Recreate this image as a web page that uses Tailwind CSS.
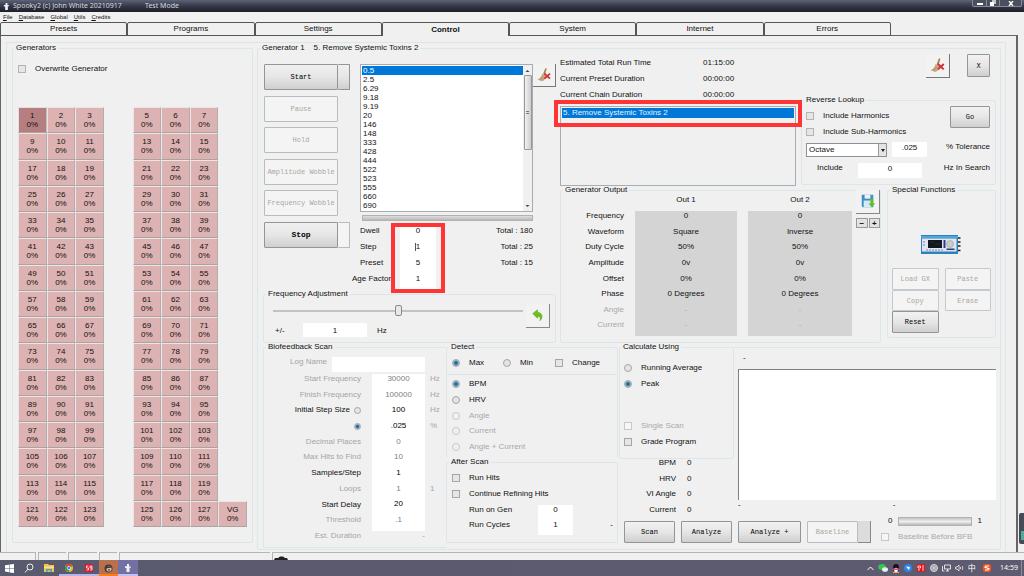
<!DOCTYPE html>
<html lang="en">
<head>
<meta charset="utf-8">
<title>Spooky2</title>
<script src="https://cdn.jsdelivr.net/npm/@tailwindcss/browser@4"></script>
</head>
<body class="relative flex min-h-screen flex-col overflow-x-hidden bg-[#f0f0f0] font-['Liberation_Sans',Arial,sans-serif] text-[8px] leading-[10px] text-[#111]">

<svg class="hidden" aria-hidden="true">
  <symbol id="broom" viewBox="0 0 24 24">
    <path d="M13.500 4.500l1.500.5-2 7-2-1z" fill="#a97c52"/>
    <path d="M10 10.500l4 2.500c0 3-2 5.500-5 5.500l-4-1.500c3-1.500 4.500-3.500 5-6.500z" fill="#c4a27c"/>
    <path d="M7.500 17l2-3" stroke="#a98660" stroke-width=".6"/>
    <path d="M12.500 10.500l6 5.500M18.500 10.500l-6 5.500" stroke="#cf2f33" stroke-width="2"/>
  </symbol>
  <symbol id="ghost" viewBox="0 0 10 10">
    <path d="M4 1h2v2l2 1-.5 1L6.500 4.500V9H3.500V5L2 5V3.500L4 3z" fill="#eef0f4"/>
    <path d="M7 1l1 1" stroke="#e04a4a" stroke-width="1"/>
  </symbol>
</svg>

<header class="flex h-3 items-center bg-linear-to-b from-[#5c6278] via-[#363948] to-[#1d1e29] pl-[2px] font-['Noto_Sans',sans-serif] text-[7px] text-[#d6d8de]">
  <svg class="h-[9px] w-[9px]"><use href="#ghost"/></svg>
  <h1 class="ml-[2px] w-[132px] whitespace-nowrap">Spooky2 (c) John White 20210917</h1>
  <span class="flex-1">Test Mode</span>
  <div class="mr-[2px] flex h-[7px] self-start overflow-hidden rounded-b-[2px] border border-t-0 border-[#858995] bg-[#4b4e5e]">
    <button aria-label="Minimize" class="flex w-[14px] items-end justify-center border-r border-[#858995] pb-px"><span class="h-[2px] w-[6px] bg-white"></span></button>
    <button aria-label="Restore" class="flex w-[13px] items-center justify-center border-r border-[#858995]"><svg class="h-[6px] w-[6px]" viewBox="0 0 6 6"><path d="M2 0h4v4H2z" fill="#bcc"/><path d="M0 2h4v4H0z" fill="#fff"/></svg></button>
    <button aria-label="Close" class="flex w-[21px] items-center justify-center"><svg class="h-[5px] w-[6px]" viewBox="0 0 6 5"><path d="M1 0l4 5M5 0L1 5" stroke="#fff" stroke-width="1.400"/></svg></button>
  </div>
</header>

<nav class="flex h-[10px] items-center gap-[6px] pl-[3px] text-[6px] leading-[10px]">
  <button><u>F</u>ile</button><button><u>D</u>atabase</button><button><u>G</u>lobal</button><button><u>U</u>tils</button><button><u>C</u>redits</button>
</nav>

<div role="tablist" class="relative z-10 -mb-px grid h-[14px] w-[87%] grid-cols-7 text-center">
  <button role="tab" class="rounded-t-[2px] border border-[#555]">Presets</button>
  <button role="tab" class="rounded-t-[2px] border border-[#555]">Programs</button>
  <button role="tab" class="rounded-t-[2px] border border-[#555]">Settings</button>
  <button role="tab" aria-selected="true" class="rounded-t-[2px] border border-b-0 border-[#555] bg-[#f0f0f0] font-bold">Control</button>
  <button role="tab" class="rounded-t-[2px] border border-[#555]">System</button>
  <button role="tab" class="rounded-t-[2px] border border-[#555]">Internet</button>
  <button role="tab" class="rounded-t-[2px] border border-[#555]">Errors</button>
</div>

<main class="mr-[6px] flex flex-1 border border-r-2 border-b-0 border-[#666] pt-[6px] pr-[10px] pl-[5px]">
<div class="flex flex-1 items-start gap-1 border border-b-0 border-[#dbe6e8] pr-1 pl-[5px]">

  <fieldset class="w-[241px] shrink-0 rounded-[2px] border border-[#dbe6e8] px-[5px] pb-[15px]">
    <legend class="-ml-[4px] px-[2px]">Generators</legend>
    <label class="mt-[11px] flex items-center gap-[9px]"><input type="checkbox" class="h-2 w-2 appearance-none border border-[#b4b4b4] bg-[#e6e6e6]">Overwrite Generator</label>
    <div id="generators" class="mt-[33px] grid h-[420px] grid-cols-8 grid-rows-[repeat(16,minmax(0,1fr))]"></div>
  </fieldset>

  <fieldset class="min-w-0 flex-1 rounded-[2px] border border-[#dbe6e8] pb-px pl-[5px]">
    <legend class="-ml-[3px] px-[2px] whitespace-pre">Generator 1    5. Remove Systemic Toxins 2</legend>

    <div class="flex gap-1 pr-1">
      <!-- Transport buttons, frequency list and adjustment -->
      <section class="flex w-[293px] shrink-0 flex-col pt-[11px]">
        <div class="flex h-[225px] items-start pl-px">
          <div class="flex h-[184px] w-[86px] shrink-0 flex-col justify-between font-['Liberation_Mono',monospace] text-[7px]">
            <div class="flex h-[26px]">
              <button class="w-[74px] rounded-[1px] border border-[#959595] bg-linear-to-b from-[#f0f0f0] via-[#e6e6e6] to-[#cfcfcf] text-black">Start</button>
              <button aria-label="Start options" class="w-3 rounded-[1px] border border-l-0 border-[#959595] bg-linear-to-b from-[#f0f0f0] via-[#e6e6e6] to-[#cfcfcf]"></button>
            </div>
            <button disabled class="h-[26px] w-[74px] rounded-[1px] border border-[#b8bcc0] bg-[#f4f4f4] text-[#a9a99f]">Pause</button>
            <button disabled class="h-[26px] w-[74px] rounded-[1px] border border-[#b8bcc0] bg-[#f4f4f4] text-[#a9a99f]">Hold</button>
            <button disabled class="h-[26px] w-[74px] rounded-[1px] border border-[#b8bcc0] bg-[#f4f4f4] whitespace-nowrap text-[#a9a99f]">Amplitude Wobble</button>
            <button disabled class="h-[26px] w-[74px] rounded-[1px] border border-[#b8bcc0] bg-[#f4f4f4] whitespace-nowrap text-[#a9a99f]">Frequency Wobble</button>
            <div class="flex h-[26px]">
              <button class="w-[74px] rounded-[1px] border border-[#959595] bg-linear-to-b from-[#f0f0f0] via-[#e6e6e6] to-[#cfcfcf] text-[8px] font-bold text-black">Stop</button>
              <button aria-label="Stop options" class="w-3 rounded-[1px] border border-l-0 border-[#b8bcc0] bg-[#f4f4f4]"></button>
            </div>
          </div>

          <div class="ml-[2px] w-[181px] shrink-0">
            <div class="ml-2 flex h-[148px] border border-[#a5acb5] bg-white">
              <ul role="listbox" aria-label="Frequencies" class="flex-1 overflow-hidden py-px pl-px leading-[9px]">
                <li role="option" aria-selected="true" class="bg-[#0078d7] pl-px text-white">0.5</li>
                <li role="option" class="pl-px">2.5</li><li role="option" class="pl-px">6.29</li><li role="option" class="pl-px">9.18</li><li role="option" class="pl-px">9.19</li><li role="option" class="pl-px">20</li><li role="option" class="pl-px">146</li><li role="option" class="pl-px">148</li><li role="option" class="pl-px">333</li><li role="option" class="pl-px">428</li><li role="option" class="pl-px">444</li><li role="option" class="pl-px">522</li><li role="option" class="pl-px">523</li><li role="option" class="pl-px">555</li><li role="option" class="pl-px">660</li><li role="option" class="pl-px">690</li>
              </ul>
              <div class="flex w-[9px] flex-col items-center bg-[#f0f0f0]">
                <svg class="h-[10px] w-[9px]" viewBox="0 0 9 10"><path d="M2.500 7h4l-2-2z" fill="#444"/></svg>
                <div class="flex h-[75px] w-2 flex-col items-center justify-center gap-px rounded-[1px] border border-[#979797] bg-linear-to-r from-[#f2f2f2] to-[#cdcdcd]"><span class="h-px w-[3px] bg-[#777]"></span><span class="h-px w-[3px] bg-[#777]"></span></div>
                <svg class="mt-auto h-[10px] w-[9px]" viewBox="0 0 9 10"><path d="M2.500 4h4l-2 2z" fill="#444"/></svg>
              </div>
            </div>
            <div role="progressbar" aria-label="Step progress" class="mt-[3px] ml-[10px] h-[6px] border border-[#b2b2b2] bg-linear-to-b from-[#dedede] to-[#b9b9b9]"></div>
            <div class="mt-[5px] flex">
              <div class="grid w-12 auto-rows-[16px]">
                <label for="dwell" class="pl-2">Dwell</label><label for="step" class="pl-2">Step</label><label for="preset" class="pl-2">Preset</label><label for="age" class="whitespace-nowrap">Age Factor</label>
              </div>
              <div class="relative grid w-9 auto-rows-[16px] bg-white">
                <input id="dwell" value="0" class="w-full min-w-0 pb-[6px] text-center">
                <div class="relative"><input id="step" value="1" class="w-full min-w-0 pb-[6px] text-center"><span class="absolute top-px left-[15px] h-2 w-px bg-[#555]"></span></div>
                <input id="preset" value="5" class="w-full min-w-0 pb-[6px] text-center">
                <input id="age" value="1" class="w-full min-w-0 pb-[6px] text-center">
                <div class="pointer-events-none absolute -inset-x-[9px] -top-[3px] -bottom-[3px] border-4 border-[#ff3535]"></div>
              </div>
              <div class="grid flex-1 auto-rows-[16px] text-right"><span>Total : 180</span><span>Total : 25</span><span>Total : 15</span></div>
            </div>
          </div>
          <button aria-label="Clear frequencies" class="h-[23px] w-[23px] shrink-0 border-r border-b border-[#777] bg-[#f2f2f2]"><svg class="h-[22px] w-[22px]"><use href="#broom"/></svg></button>
        </div>

        <fieldset class="relative h-[54px] rounded-[2px] border border-[#dbe6e8] pr-[5px] pl-[9px]">
          <legend class="-ml-[7px] px-[2px]">Frequency Adjustment</legend>
          <div class="flex items-start gap-[3px]">
            <input type="range" aria-label="Frequency adjustment" class="mt-[6px] h-3 min-w-0 flex-1 appearance-none bg-transparent [&::-webkit-slider-runnable-track]:h-[2px] [&::-webkit-slider-runnable-track]:bg-[#c2c2c2] [&::-webkit-slider-thumb]:-mt-[5px] [&::-webkit-slider-thumb]:h-[11px] [&::-webkit-slider-thumb]:w-[7px] [&::-webkit-slider-thumb]:appearance-none [&::-webkit-slider-thumb]:rounded-[2px] [&::-webkit-slider-thumb]:border [&::-webkit-slider-thumb]:border-[#8a8a8a] [&::-webkit-slider-thumb]:bg-[#e8e8e8]">
            <button aria-label="Undo" class="mt-[5px] mb-[-6px] h-6 w-6 border-r border-b border-[#888] bg-[#f2f2f2]"><svg class="h-[23px] w-[23px]" viewBox="0 0 24 24"><path d="M7 10l5-4v2.500c5 .5 6.500 5.500 2.500 9 .8-3 .3-4.500-2.500-4.800V15z" fill="#6cbf1c" stroke="#55a515" stroke-width=".5"/></svg></button>
          </div>
          <div class="mt-[3px] flex items-start">
            <label for="delta" class="w-[30px] pl-[2px] leading-3">+/-</label>
            <input id="delta" value="1" class="-mt-[2px] h-[14px] w-16 bg-white text-center">
            <span class="pl-[10px] leading-3">Hz</span>
          </div>
        </fieldset>
      </section>

      <!-- Run times, reverse lookup and outputs -->
      <section class="min-w-0 flex-1">
        <div class="flex gap-[5px]">
          <div class="flex-1 pt-[5px]">
            <dl class="grid auto-rows-[16px] grid-cols-[143px_1fr]">
              <dt>Estimated Total Run Time</dt><dd>01:15:00</dd>
              <dt>Current Preset Duration</dt><dd>00:00:00</dd>
              <dt>Current Chain Duration</dt><dd>00:00:00</dd>
            </dl>
            <div class="relative h-[80px] border border-[#a9adb3] p-px">
              <ul role="listbox" aria-label="Preset chain"><li role="option" aria-selected="true" class="h-[10px] bg-[#0078d7] pl-px leading-[10px] text-[#e4f1fc]">5. Remove Systemic Toxins 2</li></ul>
              <div class="pointer-events-none absolute -inset-x-[7px] -top-[7px] h-[27px] border-4 border-[#ff3535]"></div>
            </div>
          </div>
          <div class="w-[195px] shrink-0">
            <div class="mt-px flex justify-end gap-[17px] pr-[6px]">
              <button aria-label="Clear chain" class="h-6 w-6 border-r border-b border-[#777] bg-[#f2f2f2]"><svg class="h-[23px] w-[23px]"><use href="#broom"/></svg></button>
              <button class="h-[23px] w-[23px] rounded-[1px] border border-[#959595] bg-linear-to-b from-[#f2f2f2] via-[#e6e6e6] to-[#cfcfcf] font-['Liberation_Mono',monospace] text-[7px]">X</button>
            </div>
            <fieldset class="mt-[17px] h-[90px] rounded-[2px] border border-[#dbe6e8] pr-[5px] pl-1">
              <legend class="-ml-[2px] px-[2px]">Reverse Lookup</legend>
              <div class="flex items-start justify-between pt-px">
                <div class="grid gap-[6px] pt-[5px]">
                  <label class="flex items-center gap-[9px]"><input type="checkbox" class="h-2 w-2 appearance-none border border-[#b4b4b4] bg-[#e6e6e6]">Include Harmonics</label>
                  <label class="flex items-center gap-[9px]"><input type="checkbox" class="h-2 w-2 appearance-none border border-[#b4b4b4] bg-[#e6e6e6]">Include Sub-Harmonics</label>
                </div>
                <button class="h-[22px] w-10 rounded-[1px] border border-[#959595] bg-linear-to-b from-[#f2f2f2] via-[#e6e6e6] to-[#cfcfcf] font-['Liberation_Mono',monospace] text-[7px]">Go</button>
              </div>
              <div class="mt-[5px] flex h-[15px] items-start">
                <div class="relative h-[14px] w-[81px] self-end">
                  <select aria-label="Lookup range" class="h-full w-full appearance-none border border-[#8d9299] bg-white pl-[2px]"><option>Octave</option></select>
                  <span class="pointer-events-none absolute inset-y-px right-px flex w-2 items-center justify-center border-l border-[#999] bg-[#e4e4e4]"><svg class="h-[3px] w-1" viewBox="0 0 4 3"><path d="M0 0h4L2 3z" fill="#222"/></svg></span>
                </div>
                <input id="tol" value=".025" class="ml-[5px] h-[15px] w-[35px] bg-white pb-[4px] text-center">
                <label for="tol" class="flex-1 text-right">% Tolerance</label>
              </div>
              <div class="mt-[6px] flex h-[15px] items-start">
                <label for="hz" class="w-[52px] pl-[11px]">Include</label>
                <input id="hz" value="0" class="h-[15px] w-16 bg-white pb-[4px] text-center">
                <span class="flex-1 text-right">Hz In Search</span>
              </div>
            </fieldset>
          </div>
        </div>

        <div class="-mt-px flex items-start gap-[6px]">
          <fieldset class="h-[158px] min-w-0 flex-1 rounded-[2px] border border-[#dbe6e8]">
            <legend class="ml-[2px] px-[2px]">Generator Output</legend>
            <div class="flex gap-1">
              <table class="h-[141px] flex-1 table-fixed border-separate border-spacing-0 text-center">
                <thead><tr class="h-4 align-top"><td class="w-[74px]"></td><th class="border-r-[11px] border-[#f0f0f0] font-normal">Out 1</th><th class="w-[104px] font-normal">Out 2</th></tr></thead>
                <tbody class="align-top">
                  <tr><th class="pr-[11px] text-right font-normal">Frequency</th><td class="border-r-[11px] border-[#f0f0f0] bg-[#d4d4d4]">0</td><td class="bg-[#d4d4d4]">0</td></tr>
                  <tr><th class="pr-[11px] text-right font-normal">Waveform</th><td class="border-r-[11px] border-[#f0f0f0] bg-[#d4d4d4]">Square</td><td class="bg-[#d4d4d4]">Inverse</td></tr>
                  <tr><th class="pr-[11px] text-right font-normal">Duty Cycle</th><td class="border-r-[11px] border-[#f0f0f0] bg-[#d4d4d4]">50%</td><td class="bg-[#d4d4d4]">50%</td></tr>
                  <tr><th class="pr-[11px] text-right font-normal">Amplitude</th><td class="border-r-[11px] border-[#f0f0f0] bg-[#d4d4d4]">0v</td><td class="bg-[#d4d4d4]">0v</td></tr>
                  <tr><th class="pr-[11px] text-right font-normal">Offset</th><td class="border-r-[11px] border-[#f0f0f0] bg-[#d4d4d4]">0%</td><td class="bg-[#d4d4d4]">0%</td></tr>
                  <tr><th class="pr-[11px] text-right font-normal">Phase</th><td class="border-r-[11px] border-[#f0f0f0] bg-[#d4d4d4]">0 Degrees</td><td class="bg-[#d4d4d4]">0 Degrees</td></tr>
                  <tr class="text-[#a8a8ae]"><th class="pr-[11px] text-right font-normal">Angle</th><td class="border-r-[11px] border-[#f0f0f0] bg-[#d4d4d4]">-</td><td class="bg-[#d4d4d4]">-</td></tr>
                  <tr class="text-[#a8a8ae]"><th class="pr-[11px] text-right font-normal">Current</th><td class="border-r-[11px] border-[#f0f0f0] bg-[#d4d4d4]">-</td><td class="bg-[#d4d4d4]">-</td></tr>
                </tbody>
              </table>
              <div class="-mt-[5px] w-6 shrink-0">
                <button aria-label="Save" class="block h-6 w-6 border-r border-b border-[#888] bg-[#f2f2f2]"><svg class="h-[23px] w-[23px]" viewBox="0 0 24 24"><path d="M6 5h12v13H7l-1-1z" fill="#3f8fc4"/><path d="M9 5h6v4H9z" fill="#e8f2fa"/><path d="M8 11h8v7H8z" fill="#d5eaf5"/><path d="M15 9h3v5h2l-3.500 4-3.500-4h2z" fill="#5fbf25"/></svg></button>
                <div class="mt-1 flex gap-px"><button class="h-[10px] flex-1 border border-[#999] bg-[#e2e2e2] leading-[7px] font-bold">−</button><button class="h-[10px] flex-1 border border-[#999] bg-[#e2e2e2] leading-[7px] font-bold">+</button></div>
              </div>
            </div>
          </fieldset>

          <fieldset class="h-[153px] w-[109px] shrink-0 rounded-[2px] border border-[#dbe6e8] px-[4px]">
            <legend class="-ml-[2px] px-[2px]">Special Functions</legend>
            <svg class="mt-[40px] ml-[29px] h-[19px] w-10" viewBox="0 0 40 19" role="img" aria-label="Generator device">
              <path d="M0 0h37v19H0z" fill="#2a83bd"/><path d="M1 3.500h34.500v13H1z" fill="#e2e5ee"/><path d="M0 1h37v2H0z" fill="#4aa8dc"/><path d="M7 5h14v8H7z" fill="#15171f"/><path d="M9 7h4M14 9h5" stroke="#334" stroke-width=".6"/>
              <path d="M22.500 5h2v8h-2z" fill="#2c3a8c"/><circle cx="29" cy="9" r="3.500" fill="#c9cbc6" stroke="#a0a3aa" stroke-width=".7"/><path d="M25.500 13.500h8v1.500h-8z" fill="#2c3a8c"/><path d="M2 7h3M2 10h3M5 15h17" stroke="#7d86ab" stroke-width="1" stroke-dasharray="2 1"/>
              <path d="M37 3h2.500M37 7h2.500M37 11h2.500M37 15.500h2.500" stroke="#222" stroke-width="1.500"/>
            </svg>
            <div class="mt-[14px] grid grid-cols-2 gap-x-[6px] font-['Liberation_Mono',monospace] text-[7px] text-[#a9a99f]">
              <button disabled class="h-[22px] rounded-[1px] border border-[#c3c9cc] bg-[#f4f4f4]">Load GX</button>
              <button disabled class="h-[22px] rounded-[1px] border border-[#c3c9cc] bg-[#f4f4f4]">Paste</button>
              <button disabled class="h-[21px] rounded-[1px] border border-[#c3c9cc] bg-[#f4f4f4]">Copy</button>
              <button disabled class="h-[21px] rounded-[1px] border border-[#c3c9cc] bg-[#f4f4f4]">Erase</button>
              <button class="h-[22px] rounded-[1px] border border-[#959595] bg-linear-to-b from-[#f2f2f2] via-[#e6e6e6] to-[#cfcfcf] text-black">Reset</button>
            </div>
          </fieldset>
        </div>
      </section>
    </div>

    <div class="-mt-px flex items-start">
      <fieldset class="h-[206px] w-[183px] shrink-0 rounded-l-[2px] border border-r-0 border-[#dbe6e8] text-[#a4a4aa]">
        <legend class="ml-[2px] px-[2px] text-[#111]">Biofeedback Scan</legend>
        <div class="mt-[5px] flex h-[15px] gap-[5px]"><label for="log" class="w-[63px] text-right">Log Name</label><input id="log" class="w-[93px] bg-white"></div>
        <div class="mt-[2px] grid h-[167px] grid-cols-[97px_64px_1fr] grid-rows-[repeat(10,minmax(0,1fr))_10px]">
          <label for="sf" class="text-right">Start Frequency</label><input id="sf" value="30000" disabled class="ml-[11px] min-w-0 bg-white pb-[6px] text-center text-[#808080]"><span class="pl-[5px]">Hz</span>
          <label for="ff" class="text-right">Finish Frequency</label><input id="ff" value="100000" disabled class="ml-[11px] min-w-0 bg-white pb-[6px] text-center text-[#808080]"><span class="pl-[5px]">Hz</span>
          <label class="flex items-start justify-end gap-[4px] text-[#111]">Initial Step Size<input type="radio" name="stepsize" class="mt-[2px] h-[7px] w-[7px] appearance-none rounded-full border border-[#a5a5a5] bg-[#e4e4e4]"></label><input aria-label="Step size in Hz" value="100" class="ml-[11px] min-w-0 bg-white pb-[6px] text-center text-black"><span class="pl-[5px]">Hz</span>
          <div class="flex items-start justify-end"><input type="radio" name="stepsize" checked aria-label="Step size in percent" class="mt-[2px] h-[7px] w-[7px] appearance-none rounded-full border border-[#a5a5a5] bg-radial from-[#1b6f9c] from-30% to-[#cfdde6] to-80%"></div><input aria-label="Step size percent" value=".025" class="ml-[11px] min-w-0 bg-white pb-[6px] text-center text-black"><span class="pl-[5px]">%</span>
          <label for="dp" class="text-right">Decimal Places</label><input id="dp" value="0" disabled class="ml-[11px] min-w-0 bg-white pb-[6px] text-center text-[#808080]"><span></span>
          <label for="mh" class="text-right">Max Hits to Find</label><input id="mh" value="10" disabled class="ml-[11px] min-w-0 bg-white pb-[6px] text-center text-[#808080]"><span></span>
          <label for="ss" class="text-right text-[#111]">Samples/Step</label><input id="ss" value="1" class="ml-[11px] min-w-0 bg-white pb-[6px] text-center text-black"><span></span>
          <label for="lp" class="text-right">Loops</label><input id="lp" value="1" disabled class="ml-[11px] min-w-0 bg-white pb-[6px] text-center text-[#808080]"><span class="pl-[5px]">1</span>
          <label for="sd" class="text-right text-[#111]">Start Delay</label><input id="sd" value="20" class="ml-[11px] min-w-0 bg-white pb-[6px] text-center text-black"><span></span>
          <label for="th" class="text-right">Threshold</label><input id="th" value=".1" disabled class="ml-[11px] min-w-0 bg-white pb-[6px] text-center text-[#808080]"><span></span>
          <span class="text-right">Est. Duration</span><span class="text-right">-</span>
        </div>
      </fieldset>

      <div class="w-[172px] shrink-0">
        <fieldset class="h-[33px] rounded-t-[2px] border border-[#dbe6e8] pl-[5px]">
          <legend class="-ml-[3px] px-[2px]">Detect</legend>
          <div class="mt-[6px] grid grid-cols-[51px_52px_1fr]">
            <label class="flex items-center gap-[9px]"><input type="radio" name="detect" checked class="h-2 w-2 appearance-none rounded-full border border-[#a5a5a5] bg-radial from-[#1b6f9c] from-30% to-[#cfdde6] to-80%">Max</label>
            <label class="flex items-center gap-[9px]"><input type="radio" name="detect" class="h-2 w-2 appearance-none rounded-full border border-[#a5a5a5] bg-[#e4e4e4]">Min</label>
            <label class="flex items-center gap-[9px]"><input type="checkbox" class="h-2 w-2 appearance-none border border-[#a5a5a5] bg-[#e6e6e6]">Change</label>
          </div>
        </fieldset>
        <div class="flex h-[82px] flex-col justify-between border-x border-[#dbe6e8] pt-1 pb-[5px] pl-[5px]">
          <label class="flex items-center gap-[9px]"><input type="radio" name="measure" checked class="h-2 w-2 appearance-none rounded-full border border-[#a5a5a5] bg-radial from-[#1b6f9c] from-30% to-[#cfdde6] to-80%">BPM</label>
          <label class="flex items-center gap-[9px]"><input type="radio" name="measure" class="h-2 w-2 appearance-none rounded-full border border-[#a5a5a5] bg-[#e4e4e4]">HRV</label>
          <label class="flex items-center gap-[9px] text-[#a8a8ae]"><input type="radio" name="measure" disabled class="h-2 w-2 appearance-none rounded-full border border-[#c8c8c8] bg-[#f0f0f0]">Angle</label>
          <label class="flex items-center gap-[9px] text-[#a8a8ae]"><input type="radio" name="measure" disabled class="h-2 w-2 appearance-none rounded-full border border-[#c8c8c8] bg-[#f0f0f0]">Current</label>
          <label class="flex items-center gap-[9px] text-[#a8a8ae]"><input type="radio" name="measure" disabled class="h-2 w-2 appearance-none rounded-full border border-[#c8c8c8] bg-[#f0f0f0]">Angle + Current</label>
        </div>
        <fieldset class="h-[86px] rounded-[2px] border border-[#dbe6e8] pr-[4px] pl-[5px]">
          <legend class="-ml-[3px] px-[2px]">After Scan</legend>
          <label class="mt-[6px] flex items-center gap-[9px]"><input type="checkbox" class="h-2 w-2 appearance-none border border-[#a5a5a5] bg-[#e6e6e6]">Run Hits</label>
          <label class="mt-[6px] flex items-center gap-[9px]"><input type="checkbox" class="h-2 w-2 appearance-none border border-[#a5a5a5] bg-[#e6e6e6]">Continue Refining Hits</label>
          <div class="mt-[6px] grid auto-rows-[15px] grid-cols-[86px_35px_1fr]">
            <label for="rg" class="pl-[17px]">Run on Gen</label><input id="rg" value="0" class="min-w-0 bg-white pb-[5px] text-center"><span></span>
            <label for="rc" class="pl-[17px]">Run Cycles</label><input id="rc" value="1" class="min-w-0 bg-white pb-[5px] text-center"><span class="text-right">-</span>
          </div>
        </fieldset>
      </div>

      <div class="ml-px min-w-0 flex-1">
        <div class="flex">
          <div class="w-[115px] shrink-0">
            <fieldset class="h-[117px] rounded-[2px] border border-[#dbe6e8] pl-1">
              <legend class="-ml-[3px] px-[2px]">Calculate Using</legend>
              <label class="mt-[11px] flex items-center gap-[9px]"><input type="radio" name="calc" class="h-2 w-2 appearance-none rounded-full border border-[#a5a5a5] bg-[#e4e4e4]">Running Average</label>
              <label class="mt-[6px] flex items-center gap-[9px]"><input type="radio" name="calc" checked class="h-2 w-2 appearance-none rounded-full border border-[#a5a5a5] bg-radial from-[#1b6f9c] from-30% to-[#cfdde6] to-80%">Peak</label>
              <label class="mt-8 flex items-center gap-[9px] text-[#a8a8ae]"><input type="checkbox" disabled class="h-2 w-2 appearance-none border border-[#c8c8c8] bg-[#f6f6f6]">Single Scan</label>
              <label class="mt-[6px] flex items-center gap-[9px]"><input type="checkbox" class="h-2 w-2 appearance-none border border-[#a5a5a5] bg-[#e6e6e6]">Grade Program</label>
            </fieldset>
            <dl class="-mt-px grid h-[57px] grid-cols-[57px_1fr] content-between gap-x-[11px]">
              <dt class="text-right">BPM</dt><dd>0</dd><dt class="text-right">HRV</dt><dd>0</dd><dt class="text-right">VI Angle</dt><dd>0</dd><dt class="text-right">Current</dt><dd>0</dd>
            </dl>
          </div>
          <div class="mt-[5px] flex min-w-0 flex-1 flex-col border-t border-[#dbe6e8] pr-1 pl-1">
            <span class="pt-[5px] pb-[6px] pl-[5px]">-</span>
            <div role="img" aria-label="Scan graph" class="h-[131px] border-t border-l border-[#808080] bg-white"></div>
            <div class="grid grid-cols-[3fr_2fr]"><span>-</span><span>-</span></div>
          </div>
        </div>
        <div class="mt-px flex items-start gap-[6px] pl-[5px] font-['Liberation_Mono',monospace] text-[7px]">
          <button class="mt-[5px] h-[22px] w-[51px] rounded-[1px] border border-[#959595] bg-linear-to-b from-[#f2f2f2] via-[#e6e6e6] to-[#cfcfcf] text-black">Scan</button>
          <button class="mt-[5px] h-[22px] w-[51px] rounded-[1px] border border-[#959595] bg-linear-to-b from-[#f2f2f2] via-[#e6e6e6] to-[#cfcfcf] text-black">Analyze</button>
          <button class="mt-[5px] h-[22px] w-[63px] rounded-[1px] border border-[#959595] bg-linear-to-b from-[#f2f2f2] via-[#e6e6e6] to-[#cfcfcf] text-black">Analyze +</button>
          <div class="mt-[5px] flex h-[22px]">
            <button disabled class="w-[51px] rounded-[1px] border border-[#b8bcc0] bg-[#f4f4f4] text-[#a9a99f]">Baseline</button>
            <button aria-label="Baseline options" class="w-[13px] border-r border-b border-[#888] bg-[#dcdcdc]"></button>
          </div>
          <div class="ml-1 min-w-0 flex-1 pr-[18px] font-['Liberation_Sans',Arial,sans-serif] text-[8px]">
            <div class="flex items-center gap-[6px] pl-[7px]"><span>0</span><div role="progressbar" aria-label="Baseline level" class="h-[9px] flex-1 border border-[#b2b2b2] bg-linear-to-b from-[#c4c4c4] via-[#efefef] to-[#b9b9b9]"></div><span>1</span></div>
            <label class="mt-[6px] flex items-center gap-[9px] whitespace-nowrap text-[#a8a8ae]"><input type="checkbox" disabled class="h-2 w-2 appearance-none border border-[#c8c8c8] bg-[#f6f6f6]">Baseline Before BFB</label>
          </div>
        </div>
      </div>
    </div>
  </fieldset>
</div>
</main>

<div class="flex h-2 gap-[2px]">
  <span class="w-9 border-t border-r border-[#b5b5b5]"></span><span class="w-7 border-t border-l border-[#b5b5b5]"></span><span class="w-[29px] border-t border-l border-[#b5b5b5]"></span><span class="w-[18px] border-t border-l border-[#b5b5b5]"></span><span class="w-[151px] border-t border-l border-[#b5b5b5]"></span>
  <span class="flex flex-1 items-end border-t border-l border-[#b5b5b5]"><svg class="h-1 w-4" viewBox="0 0 16 4"><path d="M1 4l1-2h3l2-1.500h3L12 2h2l1 2z" fill="#222"/></svg></span>
</div>

<footer class="flex h-4 items-stretch bg-linear-to-r from-[#5a5a6e] to-[#5e5b70] text-white">
  <button aria-label="Start menu" class="flex w-[19px] items-center justify-center"><svg class="h-[9px] w-[9px]" viewBox="0 0 9 9"><path d="M0 1.300l4-.6v3.500H0zM4.500.6L9 0v4.200H4.500zM0 4.700h4v3.500l-4-.6zM4.500 4.700H9V9l-4.500-.6z" fill="#fff"/></svg></button>
  <button aria-label="Search" class="flex w-5 items-center justify-center"><svg class="h-[10px] w-[10px]" viewBox="0 0 10 10" fill="none" stroke="#eee"><circle cx="6" cy="4" r="3"/><path d="M4 6L1 9.500"/></svg></button>
  <button aria-label="Explorer" class="flex w-5 items-center justify-center"><svg class="h-2 w-[10px]" viewBox="0 0 10 8"><path d="M0 0h4l1 1h5v7H0z" fill="#f3c64b"/><path d="M0 2.500h10V4H0z" fill="#fbe08a"/><path d="M2 8V5h6v3H6.500V6.500h-3V8z" fill="#3fa0e0"/></svg></button>
  <button aria-label="Chrome" class="flex w-5 items-center justify-center border-b-2 border-[#b9b3e6] pt-[2px]"><svg class="h-2 w-2" viewBox="0 0 8 8"><circle cx="4" cy="4" r="4" fill="#e5b92f"/><path d="M4 4L.5 2a4 4 0 017 0z" fill="#db4437"/><path d="M4 4L.5 2A4 4 0 004 8z" fill="#2fa04e"/><circle cx="4" cy="4" r="1.900" fill="#fff"/><circle cx="4" cy="4" r="1.400" fill="#4285f4"/></svg></button>
  <button aria-label="Red app" class="flex w-5 items-center justify-center border-b-2 border-[#b9b3e6] pt-[2px]"><svg class="h-2 w-2" viewBox="0 0 8 8"><rect width="8" height="8" rx="1" fill="#e4152b"/><path d="M3.500 2H1.500v2h2v2h-2M5 2h2v2H5zM7 4v2H5" fill="none" stroke="#fff" stroke-width=".8"/></svg></button>
  <button aria-label="Portrait app" class="flex w-[19px] items-center justify-center border-b-2 border-[#ff7a1a] bg-[#b8714f] pt-[2px]"><svg class="h-[9px] w-[9px]" viewBox="0 0 9 9"><circle cx="4.500" cy="4.500" r="4" fill="#4b3a33"/><circle cx="5" cy="5" r="2.600" fill="#d9b79a"/><path d="M2 4l5-1M4 6h2" stroke="#33261f" stroke-width="1"/></svg></button>
  <button aria-label="Spooky2" class="flex w-[20px] items-center justify-center border-b-2 border-[#c5bff0] bg-[#7370a3] pt-[2px]"><svg class="h-[10px] w-[10px]"><use href="#ghost"/></svg></button>
  <div class="ml-auto grid w-[114px] grid-cols-9 place-items-center">
    <svg class="h-[5px] w-[7px]" viewBox="0 0 7 5"><path d="M.5 4l3-3 3 3" fill="none" stroke="#fff"/></svg>
    <svg class="h-2 w-[10px]" viewBox="0 0 10 8"><ellipse cx="4" cy="3" rx="3.800" ry="3" fill="#35c553"/><ellipse cx="7" cy="5.500" rx="3" ry="2.300" fill="#e6f4e6"/></svg>
    <svg class="h-[9px] w-2" viewBox="0 0 8 9"><ellipse cx="4" cy="4" rx="3" ry="4" fill="#111"/><ellipse cx="4" cy="6" rx="2" ry="2.200" fill="#fff"/><path d="M1 4.500h6v1.500H1z" fill="#e0389a"/><path d="M1 8.500h6" stroke="#f2b21c"/></svg>
    <svg class="h-2 w-2" viewBox="0 0 8 8"><circle cx="4" cy="4" r="4" fill="#2f86e8"/><path d="M2 2.500l4 .5-1 3-1-1z" fill="#fff"/></svg>
    <svg class="h-2 w-2" viewBox="0 0 8 8"><path d="M0 0h8v8H0z" fill="#e2141c"/><path d="M1 2h2.500v2H1zM5 2h2M5 4h2M1 6h2M5 6h2" fill="none" stroke="#fff" stroke-width=".8"/></svg>
    <svg class="h-2 w-2" viewBox="0 0 8 8"><circle cx="4" cy="4" r="3.500" fill="#8d8d99" stroke="#ddd"/><path d="M4 1v6M1 4h6M2 2l4 4M6 2L2 6" stroke="#ddd" stroke-width=".6"/></svg>
    <svg class="h-2 w-[9px]" viewBox="0 0 9 8" fill="none" stroke="#eee" stroke-width=".9"><path d="M2.500 1h6v4h-6zM4 7h3M5.500 5v2M.5 2v5h2"/></svg>
    <svg class="h-2 w-[9px]" viewBox="0 0 9 8" fill="none" stroke="#eee" stroke-width=".8"><path d="M.5 3h1.500l2-2v6l-2-2H.5zM5.500 3v2M7 2c1 1 1 3 0 4"/></svg>
    <span class="font-['Noto_Sans_CJK_SC',sans-serif] text-[8px]">中</span>
  </div>
  <svg class="ml-[5px] h-2 w-2 self-center" viewBox="0 0 8 8"><rect width="8" height="8" rx="2" fill="#f0561d"/><path d="M6 2H3L2 3l4 2-1 1H2" fill="none" stroke="#fff" stroke-width="1.200"/></svg>
  <time class="ml-[9px] self-center font-['Noto_Sans',sans-serif] text-[7px]">14:59</time>
  <span class="mr-[2px] ml-[3px] w-px bg-[#8e8ca0]"></span>
</footer>

<div class="absolute right-0 bottom-8 flex h-[31px] w-[5px] items-end justify-end rounded-l-[2px] bg-[#454958] pb-1"><span class="h-[9px] w-[3px] bg-[#4fae94]"></span></div>

<script>
  // Channels are numbered in rows of eight; the 4th column stays empty and the 8th only holds the virtual generator.
  const grid = document.getElementById('generators');
  for (let row = 0; row < 16; row++) {
    for (let col = 1; col <= 8; col++) {
      const virtual = row === 15 && col === 8;
      if (col === 4 || (col === 8 && !virtual)) {
        grid.append(document.createElement('span'));
        continue;
      }
      // Columns after the gap continue the numbering at 5, 6, 7.
      const n = row * 8 + col;
      const b = document.createElement('button');
      b.className = n === 1
        ? 'border border-t-[#e8dede] border-l-[#e8dede] border-r-[#c2bcbc] border-b-[#a8a4a4] bg-[#b57f7f] leading-[9px]'
        : 'border border-t-[#eee4e4] border-l-[#eee4e4] border-r-[#b2acac] border-b-[#a8a4a4] bg-[#dcb2b2] leading-[9px]';
      b.append(virtual ? 'VG' : String(n), document.createElement('br'), '0%');
      grid.append(b);
    }
  }
</script>
</body>
</html>
